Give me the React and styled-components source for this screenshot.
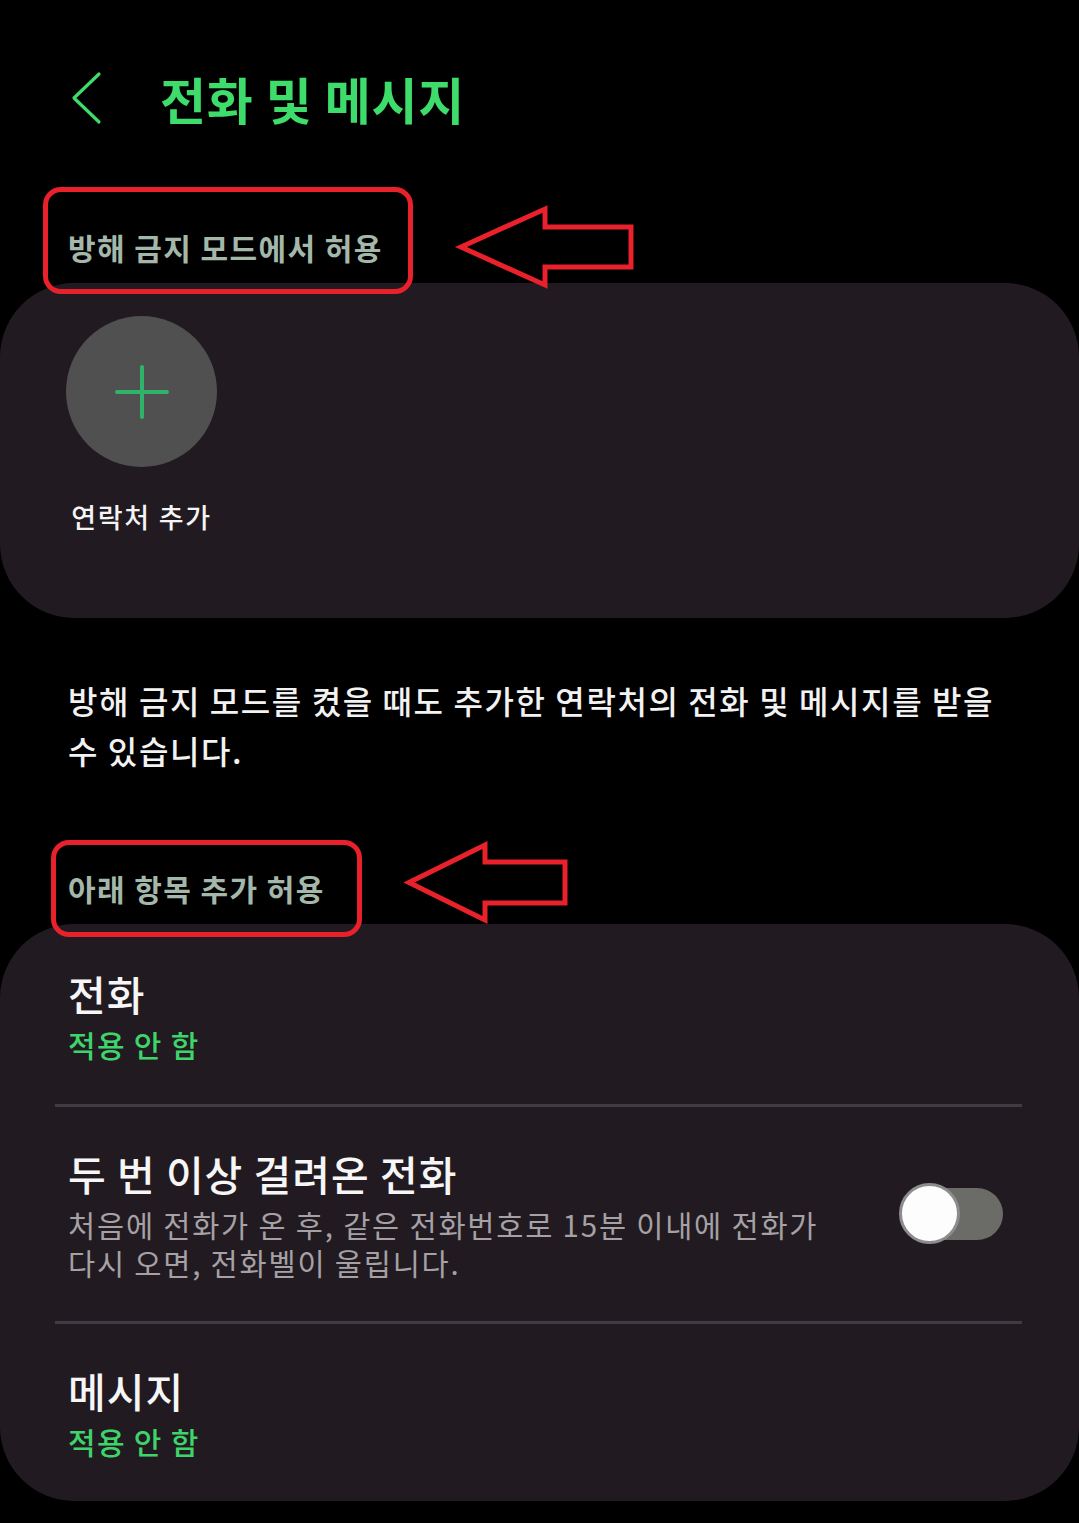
import styled, { createGlobalStyle } from "styled-components";

const GlobalStyle = createGlobalStyle`
  html, body {
    margin: 0;
    padding: 0;
    background: #000;
  }
  body {
    font-family: "Noto Sans CJK KR", "Noto Sans", sans-serif;
    -webkit-font-smoothing: antialiased;
  }
`;

const Page = styled.div`
  width: 1079px;
  min-height: 1523px;
  background: #000;
  display: flex;
  flex-direction: column;
`;

const Header = styled.div`
  display: flex;
  align-items: center;
  height: 60px;
  padding: 68px 0 2px 70px;
  gap: 56px;
`;

const BackButton = styled.button`
  display: flex;
  align-items: center;
  justify-content: center;
  width: 34px;
  height: 60px;
  padding: 0;
  border: 0;
  background: none;
`;

const Title = styled.h1`
  margin: 0;
  color: #3ddc6b;
  font-size: 50px;
  line-height: 60px;
  font-weight: 700;
  letter-spacing: 0.8px;
`;

const SectionLabel = styled.div`
  position: relative;
  margin-top: ${(p) => p.$top}px;
  margin-bottom: 16px;
  padding: 0 68px;
  color: #a3b8aa;
  font-size: 30px;
  line-height: 40px;
  font-weight: 700;
  letter-spacing: 1.4px;
`;

const MarkBox = styled.span`
  position: absolute;
  left: ${(p) => p.$left}px;
  top: ${(p) => p.$top}px;
  width: ${(p) => p.$width}px;
  height: ${(p) => p.$height}px;
  box-sizing: border-box;
  border: 5px solid #e8212b;
  border-radius: 18px;
  pointer-events: none;
`;

const MarkArrow = styled.svg`
  position: absolute;
  left: ${(p) => p.$left}px;
  top: ${(p) => p.$top}px;
  overflow: visible;
  pointer-events: none;
`;

const Card = styled.div`
  background: #221a21;
  border-radius: 74px;
  padding: ${(p) => p.$pad};
`;

const AddContact = styled.div`
  display: flex;
  flex-direction: column;
  align-items: center;
  width: 151px;
  gap: 32px;
`;

const AddCircle = styled.div`
  width: 151px;
  height: 151px;
  border-radius: 50%;
  background: #505050;
  display: flex;
  align-items: center;
  justify-content: center;
`;

const AddLabel = styled.div`
  color: #f4f4f4;
  font-size: 27px;
  line-height: 36px;
  font-weight: 500;
  white-space: nowrap;
  letter-spacing: 1.7px;
`;

const Description = styled.p`
  margin: 57px 0 0;
  padding: 0 68px;
  width: 950px;
  color: #f2f2f2;
  font-size: 32px;
  line-height: 50px;
  font-weight: 500;
  letter-spacing: 1.6px;
`;

const Row = styled.div`
  display: flex;
  align-items: center;
  padding: 42px 76px 40px 68px;
`;

const RowText = styled.div`
  flex: 1;
  display: flex;
  flex-direction: column;
  gap: 7px;
`;

const RowTitle = styled.div`
  color: #f6f6f6;
  font-size: 41px;
  line-height: 48px;
  font-weight: 500;
  letter-spacing: 1px;
`;

const RowValue = styled.div`
  color: #3ed46b;
  font-size: 30px;
  line-height: 40px;
  font-weight: 500;
  letter-spacing: 1.3px;
`;

const RowHint = styled.div`
  max-width: 770px;
  color: #a5a1a5;
  font-size: 29.5px;
  line-height: 38px;
  letter-spacing: 1.8px;
  padding-top: 1px;
`;

const Divider = styled.div`
  height: 3px;
  margin: 0 57px 0 55px;
  background: #433b43;
`;

const Switch = styled.div`
  position: relative;
  width: 104px;
  height: 61px;
  flex-shrink: 0;
  margin-top: -4px;
`;

const Track = styled.div`
  position: absolute;
  right: 0;
  top: 5px;
  width: 84px;
  height: 52px;
  border-radius: 26px;
  background: #6b6c67;
`;

const Knob = styled.div`
  position: absolute;
  left: 0;
  top: 0;
  width: 61px;
  height: 61px;
  box-sizing: border-box;
  border-radius: 50%;
  background: #fdfdfd;
  border: 3px solid #8c8c8c;
`;

function ChevronLeft() {
  return (
    <svg width="34" height="54" viewBox="0 0 34 54">
      <path
        d="M29 3 L4 27 L29 51"
        fill="none"
        stroke="#3ddc6b"
        strokeWidth="3.2"
        strokeLinecap="round"
        strokeLinejoin="round"
      />
    </svg>
  );
}

function PlusIcon() {
  return (
    <svg width="54" height="54" viewBox="0 0 54 54">
      <path
        d="M27 2 V52 M2 27 H52"
        stroke="#2fb36b"
        strokeWidth="4"
        strokeLinecap="round"
      />
    </svg>
  );
}

// hollow red arrow pointing left; w/h = full size, head = x where the head ends
function HollowArrow({ left, top, w, h, head, shaftTop, shaftBottom }) {
  const mid = h / 2;
  const pts = [
    [0, mid],
    [head, 0],
    [head, shaftTop],
    [w, shaftTop],
    [w, shaftBottom],
    [head, shaftBottom],
    [head, h],
  ]
    .map((p) => p.join(","))
    .join(" ");
  return (
    <MarkArrow $left={left} $top={top} width={w} height={h} viewBox={`0 0 ${w} ${h}`}>
      <polygon
        points={pts}
        fill="none"
        stroke="#e8212b"
        strokeWidth="5"
        strokeLinejoin="miter"
      />
    </MarkArrow>
  );
}

function Toggle() {
  return (
    <Switch>
      <Track />
      <Knob />
    </Switch>
  );
}

export default function App() {
  return (
    <>
      <GlobalStyle />
      <Page>
        <Header>
          <BackButton>
            <ChevronLeft />
          </BackButton>
          <Title>전화 및 메시지</Title>
        </Header>

        <SectionLabel $top={97}>
          방해 금지 모드에서 허용
          <MarkBox $left={43} $top={-40} $width={370} $height={107} />
          <HollowArrow
            left={461}
            top={-18}
            w={170}
            h={76}
            head={84}
            shaftTop={18}
            shaftBottom={58}
          />
        </SectionLabel>

        <Card $pad="33px 0 83px 66px">
          <AddContact>
            <AddCircle>
              <PlusIcon />
            </AddCircle>
            <AddLabel>연락처 추가</AddLabel>
          </AddContact>
        </Card>

        <Description>
          방해 금지 모드를 켰을 때도 추가한 연락처의 전화 및 메시지를 받을 수
          있습니다.
        </Description>

        <SectionLabel $top={93}>
          아래 항목 추가 허용
          <MarkBox $left={51} $top={-28} $width={311} $height={97} />
          <HollowArrow
            left={409}
            top={-23}
            w={156}
            h={75}
            head={76}
            shaftTop={17}
            shaftBottom={58}
          />
        </SectionLabel>

        <Card $pad="3px 0 0">
          <Row>
            <RowText>
              <RowTitle>전화</RowTitle>
              <RowValue>적용 안 함</RowValue>
            </RowText>
          </Row>
          <Divider />
          <Row>
            <RowText>
              <RowTitle>두 번 이상 걸려온 전화</RowTitle>
              <RowHint>
                처음에 전화가 온 후, 같은 전화번호로 15분 이내에 전화가 다시
                오면, 전화벨이 울립니다.
              </RowHint>
            </RowText>
            <Toggle />
          </Row>
          <Divider />
          <Row>
            <RowText>
              <RowTitle>메시지</RowTitle>
              <RowValue>적용 안 함</RowValue>
            </RowText>
          </Row>
        </Card>
      </Page>
    </>
  );
}
